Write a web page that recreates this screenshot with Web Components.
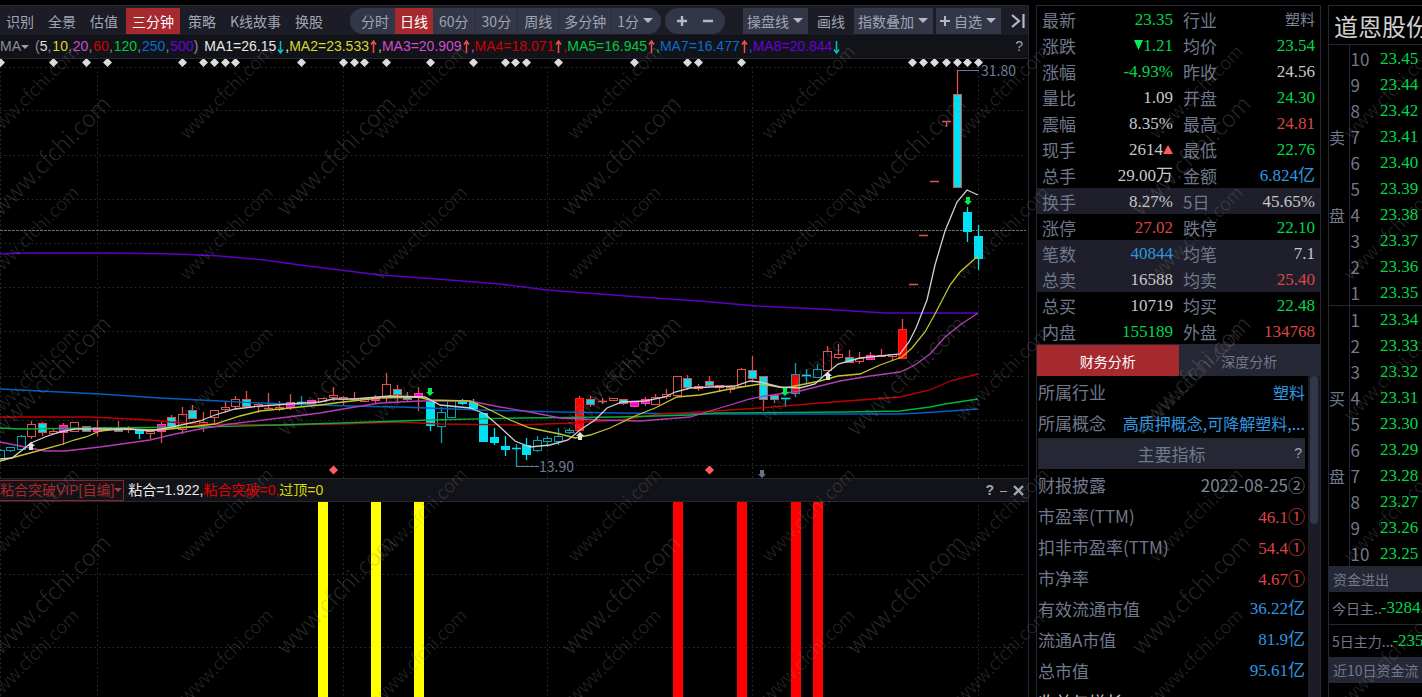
<!DOCTYPE html>
<html lang="zh-CN">
<head>
<meta charset="utf-8">
<meta name="viewport" content="width=device-width, initial-scale=1">
<title>道恩股份 日线</title>
<style>
html,body{margin:0;height:100%;background:#000;overflow:hidden}
body{font-family:"Liberation Sans","Noto Sans CJK SC",sans-serif;font-size:14px;color:#9aa0b0}
</style>
</head>
<body>
<stock-terminal></stock-terminal>
<script>
const CJK = '"Noto Sans CJK SC",sans-serif';
const define = (name, html, setup) => {
  const tpl = document.createElement('template');
  tpl.innerHTML = html;
  customElements.define(name, class extends HTMLElement {
    constructor() {
      super();
      this.attachShadow({mode: 'open'}).append(tpl.content.cloneNode(true));
      if (setup) setup(this.shadowRoot, this);
    }
  });
};

/* ---------- toolbar button ---------- */
define('tool-button', `
<style>
:host{display:inline-flex;height:26px}
button{all:unset;box-sizing:border-box;display:flex;align-items:center;gap:4px;height:26px;padding:0 6px;font:14px/26px ${CJK};color:#a0a5b4;cursor:pointer;white-space:nowrap}
:host([active]) button{background:#a6292e;color:#fff}
:host([tight]) button{padding:0 5px}
:host([first]) button{padding:0 6px 0 11px}
:host([last]) button{padding:0 8px 0 5px}
:host([boxed]) button{background:#333646;padding:0 5px 0 4px}
:host([sep]) button{border-right:1px solid #292c3a}
:host([icon]) button{padding:0 7px}
.caret{display:none;border:5px solid transparent;border-top-color:#b4b8c4;border-bottom:0}
:host([menu]) .caret{display:block}
</style>
<button type="button"><slot></slot><span class="caret"></span></button>`);

define('chart-toolbar', `
<style>
:host{display:flex;align-items:center;height:29px;background:#1b1c26;padding-right:3px;box-sizing:border-box;overflow:hidden}
nav,.right{display:flex;gap:2px}
.group{display:flex;margin-left:21px;background:#333646;border-radius:13px;overflow:hidden}
.zoom{margin-left:4px;padding:0 4px}
.right{margin-left:auto;gap:3px;align-items:center}
svg{display:block}
.end{all:unset;margin-left:7px;cursor:pointer}
</style>
<nav>
<tool-button>识别</tool-button><tool-button>全景</tool-button><tool-button>估值</tool-button><tool-button active>三分钟</tool-button><tool-button>策略</tool-button><tool-button>K线故事</tool-button><tool-button>换股</tool-button>
</nav>
<div class="group">
<tool-button first>分时</tool-button><tool-button tight active>日线</tool-button><tool-button sep>60分</tool-button><tool-button sep>30分</tool-button><tool-button sep>周线</tool-button><tool-button tight sep>多分钟</tool-button><tool-button menu last>1分</tool-button>
</div>
<div class="group zoom">
<tool-button icon><svg width="12" height="12" role="img" aria-label="放大"><path d="M6 1v10M1 6h10" stroke="#b4b8c4" stroke-width="2.4"/></svg></tool-button>
<tool-button icon><svg width="12" height="12" role="img" aria-label="缩小"><path d="M1 6h10" stroke="#b4b8c4" stroke-width="2.4"/></svg></tool-button>
</div>
<div class="right">
<tool-button boxed menu>操盘线</tool-button><tool-button>画线</tool-button><tool-button boxed menu>指数叠加</tool-button><tool-button boxed menu><svg width="10" height="10" aria-hidden="true"><path d="M5 0v10M0 5h10" stroke="#b4b8c4" stroke-width="2"/></svg>自选</tool-button>
<button class="end" aria-label="收起"><svg width="14" height="14"><path d="M1 1l7 6-7 6M12.500 0v14" fill="none" stroke="#b4b8c4" stroke-width="2.2"/></svg></button>
</div>`);

/* ---------- moving average legend ---------- */
define('ma-legend', `
<style>
:host{display:flex;align-items:center;height:23px;background:#121318;border-bottom:1px solid #262733;font-size:14px;line-height:23px;white-space:nowrap;overflow:hidden}
.ma{all:unset;display:flex;align-items:center;color:#8a8e9a;cursor:pointer}
.ma::after{content:"";border:4px solid transparent;border-top-color:#9a9eaa;border-bottom:0}
.p{margin-left:6px;color:#8a8e9a}.p i{padding-right:1px}
i{font-style:normal}
.v{margin-left:6px;display:flex}
svg{width:9px;height:14px;align-self:center}
.help{all:unset;margin-left:auto;padding-right:5px;color:#a0a4b0;cursor:pointer}
</style>
<button class="ma">MA</button><span class="p"></span><span class="v"></span><button class="help" aria-label="帮助">?</button>`, root => {
  const params = [['5','#e0e0e0'],['10','#d6d62c'],['20','#d04cd0'],['60','#d00000'],['120','#00c83c'],['250','#0a6cd0'],['500','#6a00d8']];
  root.querySelector('.p').innerHTML = '(' + params.map(([t,c]) => `<span style="color:${c}">${t}</span>`).join('<i>,</i>') + ')';
  const v = [['MA1=26.15','#e8e8e8',0],['MA2=23.533','#d6d62c',1],['MA3=20.909','#d04cd0',1],['MA4=18.071','#d00000',1],['MA5=16.945','#00c83c',1],['MA7=16.477','#0a6cd0',1],['MA8=20.844','#6a00d8',0]];
  const up = '<svg viewBox="0 0 9 14"><path d="M4.500 1v12M2 4.500l2.500-3.500 2.500 3.500" fill="none" stroke="#f0504c" stroke-width="1.500"/></svg>';
  const down = '<svg viewBox="0 0 9 14"><path d="M4.500 1v12M2 9.500l2.500 3.500 2.500-3.500" fill="none" stroke="#00c0cc" stroke-width="1.500"/></svg>';
  root.querySelector('.v').innerHTML = v.map(([t,c,u],n) => `<span style="color:${c}">${t}</span>${u?up:down}${n<6?`<span style="color:${c}">,</span>`:''}`).join('');
});

/* ---------- candlestick chart ---------- */
define('candle-chart', `
<style>
:host{display:block;min-height:0;overflow:hidden}
svg{display:block;width:100%;height:100%}
text{font:14px ${CJK};fill:#6e7b98}
</style>
<svg viewBox="0 59 1028 419" preserveAspectRatio="xMinYMin slice" role="img" aria-label="日线K线图"></svg>`, root => {
  const RED='#e0504e', CY='#00e0f4', CT='#00a4b4';
  let s = '';
  for (const y of [67,110,155,199,243,287,331,376,420,465]) s += `<path d="M0 ${y}.500H1026" stroke="#2c2d36" stroke-dasharray="1.500 3"/>`;
  for (const x of [0,97,343,547,752,978]) s += `<path d="M${x}.500 67V478" stroke="#2c2d36" stroke-dasharray="1.500 3"/>`;
  s += `<path d="M0 230.500H1026" stroke="#6c6c6c" stroke-dasharray="3 1"/>`;
  // [x, kind, body top, body bottom, wick top, wick bottom]
  // h hollow red, r solid red, c cyan with red rim, C cyan, H hollow cyan, m magenta, t red tick, T cyan tick, R red with cyan wick
  const k = [[0,'H',450,460,449,462],[10,'H',447,450,447,452],[21,'H',436,449,435,451],[31,'h',424,436,421,439],[42,'c',423,432,422,436],[53,'h',431,433,429,434],[63,'m',425,432,423,445],[74,'h',422,431,422,431],[86,'c',426,431,426,431],[97,'m',427,431,420,436],[107,'h',427,429,427,429],[118,'c',429,431,421,431],[128,'t',429,429,426,433],[139,'C',430,433,430,439],[150,'h',431,433,431,439],[161,'m',424,431,422,443],[171,'c',417,426,415,427],[182,'h',414,429,407,434],[192,'c',410,418,405,418],[203,'h',422,424,412,432],[214,'h',410,417,410,425],[225,'h',407,409,402,413],[235,'h',399,406,396,410],[246,'c',399,406,391,408],[258,'h',404,406,403,413],[268,'t',408,408,393,409],[279,'h',407,409,401,411],[290,'m',402,407,394,410],[301,'T',402,402,396,407],[311,'m',400,403,400,407],[322,'h',398,401,398,401],[333,'h',395,397,387,401],[343,'h',397,399,396,405],[354,'t',399,399,392,400],[364,'h',398,401,398,401],[375,'m',397,400,395,403],[386,'h',384,397,373,402],[397,'c',389,394,385,403],[407,'c',396,399,392,401],[418,'m',393,397,387,411],[430,'C',401,425,401,431],[441,'H',412,426,407,443],[451,'H',400,417,400,417],[462,'C',401,403,399,405],[473,'C',402,408,399,408],[483,'C',413,441,413,441],[494,'C',437,442,428,445],[505,'C',446,449,436,456],[516,'T',448,448,444,466],[526,'C',445,454,438,460],[537,'H',440,450,436,452],[547,'H',438,441,436,447],[558,'H',436,441,428,445],[569,'H',430,432,428,434],[579,'r',398,430,396,430],[590,'c',399,404,396,407],[602,'t',401,401,398,404],[613,'h',398,400,398,400],[623,'c',399,403,399,405],[634,'m',401,406,401,406],[645,'m',399,403,397,406],[655,'h',397,404,394,404],[666,'h',394,396,389,399],[677,'h',376,395,376,395],[687,'c',378,387,375,390],[698,'h',386,388,384,391],[709,'c',381,385,376,387],[719,'h',385,387,385,392],[730,'h',387,389,387,393],[741,'h',369,386,368,386],[752,'c',370,378,356,381],[763,'c',376,399,376,411],[774,'c',395,399,395,403],[785,'T',398,398,398,407],[795,'R',374,393,363,397],[806,'T',375,375,369,384],[817,'H',369,377,364,378],[827,'h',351,370,346,370],[838,'h',354,357,344,359],[849,'c',357,362,350,362],[859,'h',358,361,352,364],[870,'m',355,359,352,359],[881,'h',355,356,349,356],[892,'h',354,356,354,361],[902,'r',329,358,319,358],[913,'t',284,284,284,284],[923,'t',235,235,235,235],[934,'t',181,181,181,181],[946,'t',121,121,121,127],[957,'c',94,187,70,187],[967,'C',212,231,207,242],[978,'C',236,258,225,270]];
  for (const [x,t,a,b,w,z] of k) {
    const cy = 'CHTR'.includes(t), col = cy ? (t==='C'?CY:CT) : RED;
    if (w < a) s += `<path d="M${x}.500 ${w}V${a}" stroke="${col}" stroke-width="1.300"/>`;
    if (z > b) s += `<path d="M${x}.500 ${b}V${z}" stroke="${col}" stroke-width="1.300"/>`;
    if ('tT'.includes(t)) s += `<path d="M${x-4} ${a}.500h9" stroke="${t==='T'?CY:RED}" stroke-width="1.500"/>`;
    else {
      const fill = {h:'none',H:'none',r:'#ff0000',R:'#ff0000',c:CY,C:CY,m:'#ff00e0'}[t];
      const rim = {h:RED,H:CT,r:'#ff2020',R:CT,c:RED,C:CY,m:'#ff4098'}[t];
      s += `<rect x="${x-3.5}" y="${a+.5}" width="8" height="${Math.max(1,b-a)}" fill="${fill}" stroke="${rim}"/>`;
    }
  }
  const lines = [
    ['#5f00c8','0,254 20,253 110,253 176,254 220,256 264,260 300,265 340,270 380,275 437,279 500,284 547,290 600,294 640,297 700,301 757,306 820,309 885,313 978,313'],
    ['#0060c0','0,389 40,391 100,394 160,398 220,401 260,403 350,406 400,407 480,410 560,412 620,413 700,414 900,414 920,413 950,411 978,409'],
    ['#c00000','0,417 90,417 150,420 170,422 200,424 280,425 340,424 400,422 440,424 520,425 570,423 620,420 660,414 700,412 760,408 820,403 860,400 900,397 930,390 950,381 978,374'],
    ['#00b43c','0,428 20,429 100,428 200,427 280,425 340,423 430,420 520,418 620,417 690,415 715,413 845,412 900,411 930,407 945,404 978,399'],
    ['#b43cb4','0,442 20,446 45,451 65,451 100,447 150,440 175,434 200,429 230,424 280,418 320,413 343,409 380,403 420,401 470,401 500,407 530,412 560,418 600,420 640,421 690,417 710,411 750,399 765,396 800,391 840,381 870,376 900,372 915,365 930,354 945,337 960,325 978,313'],
    ['#c4c42c','0,461 30,453 60,445 74,440 86,437 100,431 120,429 160,430 180,428 215,424 240,416 260,411 290,408 320,405 343,402 380,398 418,397 430,400 470,401 490,410 510,420 530,428 560,434 575,438 590,435 610,428 635,416 655,408 677,397 700,395 730,389 760,384 785,388 805,384 820,381 838,376 860,374 880,365 902,357 912,348 925,332 935,314 950,285 960,272 978,256'],
    ['#d0d0d0','0,459 12,458 31,443 45,437 60,432 75,429 130,429 150,431 172,427 200,421 215,415 235,409 260,406 290,404 320,402 333,399 354,399 390,396 425,397 440,405 470,408 485,414 500,427 515,441 530,447 550,445 568,440 580,430 595,420 607,408 622,402 645,401 665,397 675,392 690,388 710,387 735,386 750,381 760,382 780,387 800,388 815,384 827,373 838,364 860,358 880,356 900,354 909,342 916,328 927,300 935,265 945,231 957,202 967,190 978,195']];
  for (const [c,p] of lines) s += `<polyline points="${p}" fill="none" stroke="${c}" stroke-width="1.300"/>`;
  const dia = (x,y,c) => `<path d="M${x-4} ${y}l4.500-4.500 4.500 4.500-4.500 4.500z" fill="${c}"/>`;
  for (const x of [0,53,86,107,182,203,214,225,235,301,343,354,364,386,430,473,505,515,526,558,634,687,698,741,912,923,934,946,957,967,978]) s += dia(x,62.5,'#dcdcdc');
  s += dia(333,470,'#ff5c5c') + dia(709,470,'#ff5c5c');
  const arrow = (x,y,c,d) => `<path d="M${x-2} ${y-4*d}h4v${4*d}h2l-4 ${4*d}-4 ${-4*d}h2z" fill="${c}"/>`;
  s += arrow(968,201,'#00f050',1)+arrow(430,392,'#00f050',1)+arrow(785,392,'#00f050',1)+arrow(762,474,'#66728c',1);
  s += arrow(31,446,'#e0e0e0',-1)+arrow(580,436,'#e0e0e0',-1)+arrow(828,376,'#e0e0e0',-1);
  s += `<path d="M957 70.500h22M516 466.500h23" stroke="#6e7b98"/><text x="981" y="76">31.80</text><text x="539" y="472">13.90</text>`;
  root.querySelector('svg').innerHTML = s;
});

/* ---------- indicator ---------- */
define('indicator-header', `
<style>
:host{display:flex;align-items:center;height:22px;background:#121318;border:solid #262733;border-width:1px 0;font-size:14px;line-height:20px;white-space:nowrap;overflow:hidden}
.name{all:unset;box-sizing:border-box;display:flex;align-items:center;height:21px;border:1px solid #8c2328;border-left:0;color:#a8282c;padding-right:1px;cursor:pointer}
.name::after{content:"";border:4px solid transparent;border-top-color:#c03034;border-bottom:0}
p{margin:0 0 0 4px;color:#e8e8e8}
.r{color:#e00000}.y{color:#d8d800}
.act{margin-left:auto;display:flex;align-items:center;gap:6px;padding-right:4px}
button.i{all:unset;color:#a4a6ac;cursor:pointer;font-weight:bold}
svg{display:block}
</style>
<button class="name">粘合突破VIP[自编]</button>
<p>粘合=1.922,<span class="r">粘合突破=0,</span><span class="y">过顶=0</span></p>
<div class="act"><button class="i" aria-label="帮助">?</button><button class="i" aria-label="最小化"><svg width="7" height="10"><path d="M0 6.500h7" stroke="#a4a6ac"/></svg></button><button class="i" aria-label="关闭"><svg width="11" height="11"><path d="M1 1l9 9M10 1L1 10" stroke="#a4a6ac" stroke-width="2.400"/></svg></button></div>`);

define('indicator-chart', `
<style>:host{display:block;min-height:0;overflow:hidden}svg{display:block;width:100%;height:100%}</style>
<svg viewBox="0 502 1028 195" preserveAspectRatio="xMinYMin slice" role="img" aria-label="粘合突破指标"></svg>`, root => {
  let s = '';
  for (const y of [574,647]) s += `<path d="M0 ${y}.500H1026" stroke="#2c2d36" stroke-dasharray="1.500 3"/>`;
  for (const x of [0,97,343,547,752,978]) s += `<path d="M${x}.500 505V697" stroke="#2c2d36" stroke-dasharray="1.500 3"/>`;
  for (const x of [318,371,414]) s += `<rect x="${x}" y="502" width="10" height="195" fill="#ff0"/>`;
  for (const x of [673,737,791,813]) s += `<rect x="${x}" y="502" width="10" height="195" fill="#f00"/>`;
  root.querySelector('svg').innerHTML = s;
});

/* ---------- quote table ---------- */
const tones = `.g{color:#00d84a}.r{color:#dc4644}.b{color:#3096e0}.w{color:#c8c8c8}.n{color:#7c8496}`;
define('quote-table', `
<style>
:host{display:block;border-bottom:1px solid #262733}
table{width:100%;table-layout:fixed;border-collapse:collapse;font:17px/24px "Liberation Serif","Noto Sans CJK SC",serif}
th{font:17px/24px ${CJK};text-align:left;color:#70788c;padding:2px 0 0 5px}
th:nth-child(3){padding-left:10px}
td{text-align:right;padding:2px 0 0;white-space:nowrap}
td:last-child{padding-right:5px}
tr{height:26px}
tr.hl{background:#1e1f2a}
.s{font-size:15px}
${tones}
</style><table><colgroup><col style="width:50px"><col><col style="width:61px"><col></colgroup><tbody></tbody></table>`, root => {
  const up = '<svg width="10" height="10"><path d="M5 0l5 9H0z" fill="#ff5c54"/></svg>', dn = '<svg width="9" height="11"><path d="M0 0h9L4.500 10z" fill="#00f050"/></svg>';
  const rows = [['最新','23.35','g','行业','塑料','n s'],['涨跌',dn+'1.21','g','均价','23.54','g'],['涨幅','-4.93%','g','昨收','24.56','w'],['量比','1.09','w','开盘','24.30','g'],['震幅','8.35%','w','最高','24.81','r'],['现手','2614'+up,'w','最低','22.76','g'],['总手','29.00万','w','金额','6.824亿','b'],['换手','8.27%','w','5日','45.65%','w',1],['涨停','27.02','r','跌停','22.10','g'],['笔数','40844','b','均笔','7.1','w',1],['总卖','16588','w','均卖','25.40','r',1],['总买','10719','w','均买','22.48','g'],['内盘','155189','g','外盘','134768','r']];
  root.querySelector('tbody').innerHTML = rows.map(r => `<tr${r[6]?' class="hl"':''}><th scope="row">${r[0]}</th><td class="${r[2]}">${r[1]}</td><th scope="row">${r[3]}</th><td class="${r[5]}">${r[4]}</td></tr>`).join('');
});

define('analysis-tabs', `
<style>
:host{display:grid;grid-template-columns:1fr 1fr;height:31px;background:#262734}
button{all:unset;text-align:center;font:14px/28px ${CJK};color:#70788c;cursor:pointer}
button[aria-selected=true]{background:#a6292e;color:#fff}
</style>
<button role="tab" aria-selected="true">财务分析</button><button role="tab" aria-selected="false">深度分析</button>`);

define('finance-list', `
<style>
:host{display:grid;grid-template-columns:minmax(0,1fr) 12px;min-height:0;overflow:hidden}
dl{margin:0;padding:0 3px 0 1px}
div.row{display:flex;justify-content:space-between;height:31px;font:17px/31px ${CJK};white-space:nowrap}
dt{color:#70788c}dd{margin:0;font-family:"Liberation Serif","Noto Sans CJK SC",serif}
dd i,dd.sans{font-style:normal;font-family:${CJK}}
a{color:inherit;text-decoration:none;font-size:16px}
h3{position:relative;margin:0;height:31px;background:#262734;color:#70788c;text-align:center;font:17px/31px ${CJK}}
h3 button{all:unset;position:absolute;right:3px;top:0;color:#a0a4b0;font:14px/31px "Liberation Sans",sans-serif;cursor:pointer}
.bar{background:#1b1c26;padding:0 2px}
.bar span{display:block;height:148px;background:#333648;border-radius:4px}
.w{color:#b0b0b4}
${tones}
</style><dl></dl><div class="bar"><span></span></div>`, root => {
  const row = (l,v,c) => `<div class="row"><dt>${l}</dt><dd class="${c}">${v}</dd></div>`;
  root.querySelector('dl').innerHTML =
    row('所属行业','<a href="#">塑料</a>','b sans') + row('所属概念','<a href="#">高质押概念,可降解塑料,...</a>','b sans') +
    '<h3>主要指标<button aria-label="帮助">?</button></h3>' +
    row('财报披露','2022-08-25<i>②</i>','n sans') + row('市盈率(TTM)','46.1<i>①</i>','r') + row('扣非市盈率(TTM)','54.4<i>①</i>','r') + row('市净率','4.67<i>①</i>','r') +
    row('有效流通市值','36.22亿','b') + row('流通A市值','81.9亿','b') + row('总市值','95.61亿','b') + '<div class="row"><dt class="w">收益与增长</dt></div>';
});

/* ---------- order book ---------- */
define('order-book', `
<style>
:host{display:block;border:solid #262733;border-width:1px 0 0 1px;overflow:hidden;white-space:nowrap}
h1{margin:0;height:38px;padding-left:5px;border-bottom:1px solid #262733;font:24px/40px ${CJK};color:#d0d0d0}
table{width:100%;table-layout:fixed;border-collapse:collapse;font:17px/24px "Liberation Serif",serif}
tbody+tbody tr:first-child>*{border-top:1px solid #262733}
th,td{padding:2px 0 0;text-align:left}
tr{height:26px}
th{font:17px/24px ${CJK};color:#70788c}
th.side{font-size:16px;border-right:1px solid #262733}
th.lv{padding-left:1px}
${tones}
h2{margin:0;height:26px;background:#262734;color:#70788c;padding-left:4px;font:14px/26px ${CJK}}
.flow{display:flex;height:32px;padding-left:3px;color:#70788c;font:14px/32px ${CJK}}
.flow+.flow{border-top:1px solid #262733}
.flow b{margin-left:-1px;font:17px/32px "Liberation Serif",serif}
</style>
<h1>道恩股份</h1>
<table><colgroup><col style="width:20px"><col style="width:31px"><col></colgroup></table>
<h2>资金进出</h2>
<div class="flow">今日主..<b class="g">-3284.2</b></div>
<div class="flow">5日主力...<b class="g">-2353</b></div>
<h2>近10日资金流</h2>`, root => {
  const body = (prices, levels, side) => '<tbody>' + prices.map((p,n) => `<tr><th class="side">${n===3?side:n===6?'盘':''}</th><th class="lv" scope="row">${levels[n]}</th><td class="g">${p}</td></tr>`).join('') + '</tbody>';
  const up = [1,2,3,4,5,6,7,8,9,10];
  root.querySelector('table').insertAdjacentHTML('beforeend',
    body(['23.45','23.44','23.42','23.41','23.40','23.39','23.38','23.37','23.36','23.35'], [...up].reverse(), '卖') +
    body(['23.34','23.33','23.32','23.31','23.30','23.29','23.28','23.27','23.26','23.25'], up, '买'));
});

/* ---------- watermark over the whole window ---------- */
define('site-watermark', `
<style>:host{position:absolute;inset:0;pointer-events:none;overflow:hidden}svg{width:100%;height:100%;display:block}text{fill:#909090;fill-opacity:.28;font-family:"Noto Sans CJK SC",sans-serif;font-weight:300}</style><svg aria-hidden="true"></svg>`, root => {
  let s = '';
  const put = (x,y,f) => s += `<text transform="translate(${x} ${y}) rotate(-45)" font-size="${f}">www.cfchi.com</text>`;
  for (let y = 140; y < 720; y += 141) for (let x = -7; x < 1422; x += 194) put(x,y,18);
  for (const y of [217,437,656]) for (let x = 1; x < 1422; x += 285) put(x,y,23);
  root.querySelector('svg').innerHTML = s;
});

define('side-panel', `
<style>:host{display:grid;grid-template-rows:auto auto minmax(0,1fr);border:1px solid #262733;border-bottom:0;min-height:0;overflow:hidden}</style><slot></slot>`);
define('chart-panel', `
<style>:host{display:grid;grid-template-rows:auto auto minmax(0,419fr) auto minmax(0,195fr);border:solid #262733;border-width:1px 1px 0 0;min-width:0;min-height:0}</style><slot></slot>`);

define('stock-terminal', `
<style>
:host{position:relative;display:grid;grid-template-columns:minmax(0,1fr) 285px 94px;column-gap:7px;height:100vh;padding-top:5px;box-sizing:border-box;overflow:hidden}
</style>
<chart-panel><chart-toolbar></chart-toolbar><ma-legend></ma-legend><candle-chart></candle-chart><indicator-header></indicator-header><indicator-chart></indicator-chart></chart-panel>
<side-panel><quote-table></quote-table><analysis-tabs></analysis-tabs><finance-list></finance-list></side-panel>
<order-book></order-book>
<site-watermark></site-watermark>`);
</script>
</body>
</html>
